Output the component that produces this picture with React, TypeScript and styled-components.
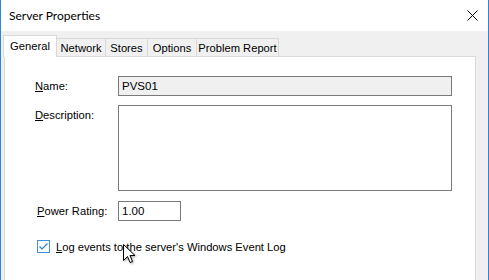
import React from 'react';
import styled, { createGlobalStyle } from 'styled-components';

const GlobalStyle = createGlobalStyle`
  html, body {
    margin: 0;
    padding: 0;
    background: #ffffff;
  }
  body {
    font-family: 'Liberation Sans', Arial, sans-serif;
    font-size: 11.2px;
    color: #000;
  }
`;

const Window = styled.div`
  position: relative;
  width: 489px;
  height: 280px;
  box-sizing: border-box;
  border-left: 1px solid #2b87d3;
  border-right: 1px solid #2b87d3;
  display: flex;
  flex-direction: column;
  overflow: hidden;
  background: #f0f0f0;
`;

const TitleBar = styled.div`
  height: 31px;
  flex: none;
  background: #fff;
  display: flex;
  align-items: center;
  justify-content: space-between;
  padding: 0 10px 0 8px;
`;

const Title = styled.span`
  font-family: Lato, 'Noto Sans', sans-serif;
  font-size: 12px;
  color: #000;
  margin-top: -1px;
`;

const CloseButton = styled.div`
  width: 11px;
  height: 11px;
  display: flex;
  margin-top: -1px;
`;

const Body = styled.div`
  flex: 1;
  display: flex;
  flex-direction: column;
  padding: 4px 12px 0 3px;
`;

const TabStrip = styled.div`
  display: flex;
  align-items: flex-end;
  height: 22px;
  margin-left: -1px;
  margin-bottom: -1px;
  position: relative;
  z-index: 1;
`;

const Tab = styled.div<{ $active?: boolean; $w: number }>`
  box-sizing: border-box;
  width: ${p => p.$w}px;
  height: ${p => (p.$active ? 22 : 19)}px;
  margin-left: -1px;
  border: 1px solid #d9d9d9;
  border-bottom: ${p => (p.$active ? 'none' : '1px solid #d9d9d9')};
  background: ${p => (p.$active ? '#fff' : '#f0f0f0')};
  display: flex;
  align-items: center;
  justify-content: center;
  padding-bottom: ${p => (p.$active ? 2 : 0)}px;
  position: relative;
  z-index: ${p => (p.$active ? 2 : 1)};
  white-space: nowrap;

  &:first-child {
    margin-left: 0;
  }
`;

const Panel = styled.div`
  flex: 1;
  background: #fff;
  border: 1px solid #d9d9d9;
  border-bottom: none;
  padding: 19px 0 0 30px;
  display: flex;
  flex-direction: column;
`;

const FieldRow = styled.div<{ $top?: boolean; $gap: number }>`
  display: flex;
  align-items: ${p => (p.$top ? 'flex-start' : 'center')};
  margin-bottom: ${p => p.$gap}px;
`;

const Label = styled.label<{ $top?: boolean; $indent?: number }>`
  box-sizing: border-box;
  width: 83px;
  flex: none;
  padding-top: ${p => (p.$top ? 4 : 0)}px;
  padding-left: ${p => p.$indent ?? 0}px;
`;

const Key = styled.span`
  text-decoration: underline;
`;

const TextBox = styled.div<{ $w: number; $h: number; $readonly?: boolean }>`
  box-sizing: border-box;
  width: ${p => p.$w}px;
  height: ${p => p.$h}px;
  border: 1px solid #7a7a7a;
  background: ${p => (p.$readonly ? '#f0f0f0' : '#fff')};
  padding: 2px 0 0 3px;
  font-size: 11.5px;
  line-height: 14px;
`;

const CheckRow = styled.div`
  display: flex;
  align-items: center;
  margin-left: 2px;
  gap: 6px;
`;

const CheckBox = styled.div`
  box-sizing: border-box;
  width: 13px;
  height: 13px;
  border: 1px solid #3c8fd8;
  background: #fff;
  display: flex;
  align-items: center;
  justify-content: center;
`;

const Cursor = styled.svg`
  position: absolute;
  left: 122px;
  top: 244px;
  z-index: 5;
  filter: drop-shadow(1px 1px 1px rgba(0, 0, 0, 0.35));
`;

export default function App() {
  return (
    <>
      <GlobalStyle />
      <Window>
        <TitleBar>
          <Title>Server Properties</Title>
          <CloseButton>
            <svg width="11" height="11" viewBox="0 0 11 11">
              <path d="M0.5 0.5 L10.5 10.5 M10.5 0.5 L0.5 10.5" stroke="#000" strokeWidth="1" />
            </svg>
          </CloseButton>
        </TitleBar>
        <Body>
          <TabStrip>
            <Tab $active $w={54}>General</Tab>
            <Tab $w={50}>Network</Tab>
            <Tab $w={43}>Stores</Tab>
            <Tab $w={50}>Options</Tab>
            <Tab $w={83}>Problem Report</Tab>
          </TabStrip>
          <Panel>
            <FieldRow $gap={9}>
              <Label><Key>N</Key>ame:</Label>
              <TextBox $w={334} $h={20} $readonly>PVS01</TextBox>
            </FieldRow>
            <FieldRow $top $gap={10}>
              <Label $top><Key>D</Key>escription:</Label>
              <TextBox $w={334} $h={86} />
            </FieldRow>
            <FieldRow $gap={19}>
              <Label $indent={2}><Key>P</Key>ower Rating:</Label>
              <TextBox $w={63} $h={20}>1.00</TextBox>
            </FieldRow>
            <CheckRow>
              <CheckBox>
                <svg width="11" height="11" viewBox="0 0 11 11">
                  <path d="M1.5 5.5 L4 8 L9.5 2.5" stroke="#2a7ed0" strokeWidth="1.2" fill="none" />
                </svg>
              </CheckBox>
              <span><Key>L</Key>og events to the server's Windows Event Log</span>
            </CheckRow>
          </Panel>
        </Body>
        <Cursor width="14" height="22" viewBox="0 0 14 22">
          <path
            d="M0.5 0.5 L0.5 16.5 L4.5 12.5 L7 18.5 L9.5 17.5 L7 11.5 L12 11.5 Z"
            fill="#fff"
            stroke="#000"
            strokeWidth="1"
            strokeLinejoin="miter"
          />
        </Cursor>
      </Window>
    </>
  );
}
